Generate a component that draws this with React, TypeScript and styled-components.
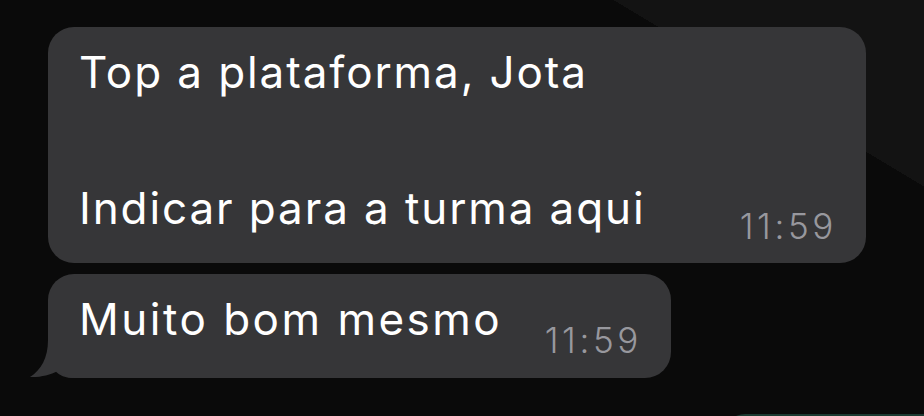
import React from "react";
import styled, { createGlobalStyle } from "styled-components";

const GlobalStyle = createGlobalStyle`
  html, body {
    margin: 0;
    padding: 0;
    background: #0a0a0a;
  }
  body {
    font-family: Inter, "Noto Sans", "Liberation Sans", sans-serif;
    -webkit-font-smoothing: antialiased;
  }
`;

const Screen = styled.div`
  position: relative;
  width: 924px;
  height: 416px;
  overflow: hidden;
  box-sizing: border-box;
  padding: 27px 0 0 48px;
  display: flex;
  flex-direction: column;
  gap: 11px;
  background: linear-gradient(31deg, #0a0a0a 80.8%, #131313 80.8%);
`;

const Bubble = styled.div<{ $width: number; $tail?: boolean }>`
  position: relative;
  box-sizing: border-box;
  width: ${p => p.$width}px;
  display: flex;
  align-items: flex-end;
  justify-content: space-between;
  padding: 11px 32px ${p => (p.$tail ? 25 : 21)}px 31px;
  background: #363638;
  border-radius: 26px;
  border-bottom-left-radius: ${p => (p.$tail ? 24 : 26)}px;
`;

const Message = styled.div<{ $spacing: number }>`
  position: relative;
  color: #ffffff;
  font-size: 44px;
  line-height: 68px;
  letter-spacing: ${p => p.$spacing}px;
  white-space: pre-wrap;
`;

const Time = styled.span<{ $drop: number }>`
  color: #98989e;
  font-size: 35px;
  line-height: 40px;
  font-weight: 300;
  letter-spacing: 3.6px;
  margin-right: -3px;
  margin-bottom: -${p => p.$drop}px;
`;

const Tail = styled.svg`
  position: absolute;
  left: -20px;
  bottom: 0;
  width: 60px;
  height: 60px;
`;

const Outgoing = styled.div`
  align-self: flex-end;
  width: 201px;
  height: 40px;
  margin-top: 25px;
  background: #1b3a31;
  border-top-left-radius: 22px;
  flex-shrink: 0;
`;

export default function App() {
  return (
    <>
      <GlobalStyle />
      <Screen>
        <Bubble $width={818}>
          <Message $spacing={1.9}>{"Top a plataforma, Jota\n\nIndicar para a turma aqui"}</Message>
          <Time $drop={4}>11:59</Time>
        </Bubble>
        <Bubble $width={623} $tail>
          <Tail viewBox="0 0 60 60">
            <path
              d="M20 0 L20 22 C20 40 13 52 2 59 C12 59.5 22 57 30 53 C34 57 38 60 46 60 L60 60 L60 0 Z"
              fill="#363638"
            />
          </Tail>
          <Message $spacing={2.5}>Muito bom mesmo</Message>
          <Time $drop={7}>11:59</Time>
        </Bubble>
        <Outgoing />
      </Screen>
    </>
  );
}
